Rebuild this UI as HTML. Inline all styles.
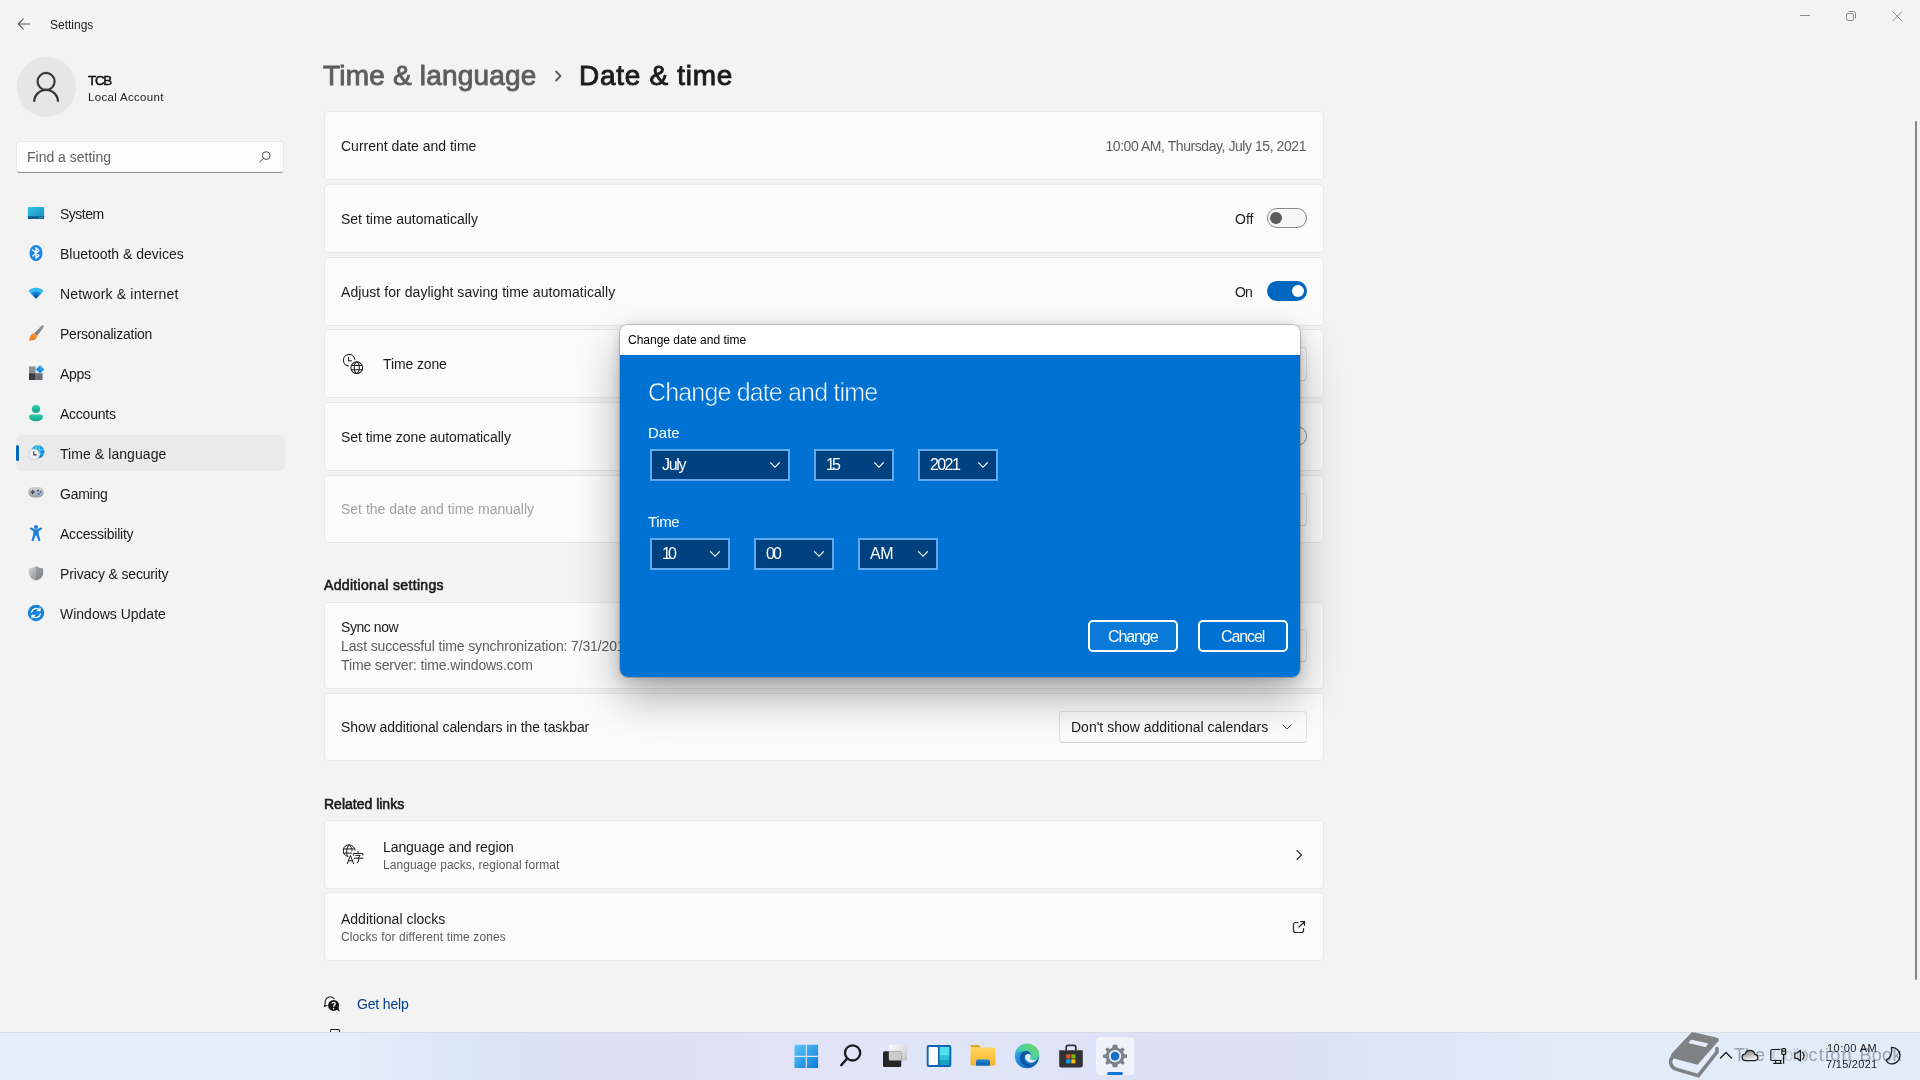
<!DOCTYPE html>
<html>
<head>
<meta charset="utf-8">
<title>Settings</title>
<style>
*{box-sizing:border-box;margin:0;padding:0}
html,body{width:1920px;height:1080px;overflow:hidden;background:#f3f3f3;font-family:"Liberation Sans",sans-serif;color:#1b1b1b}
.abs{position:absolute}
.t{position:absolute;white-space:nowrap;line-height:1}
#win{position:absolute;left:0;top:0;width:1920px;height:1032px;overflow:hidden;background:transparent;will-change:transform}
.card{position:absolute;left:324px;width:1000px;background:#fbfbfb;border:1px solid #e7e7e7;border-radius:4px}
.nav{position:absolute;font-size:14px;white-space:nowrap;line-height:1;color:#1b1b1b}
.ico{position:absolute}
.wm{font-size:18px;color:rgba(80,86,94,0.500)}
.c14{font-size:14px}
.c12{font-size:12px}
.sb{-webkit-text-stroke:0.6px #1b1b1b}
.sel{position:absolute;background:#00427f;border:2px solid #62a9ec;height:32px;color:#fff;font-size:16px}
.sel span{position:absolute;left:10px;top:6px;line-height:1;white-space:nowrap}
.sel svg{position:absolute;right:7px;top:10px}
.btn{position:absolute;height:32px;width:90px;border:2px solid #fff;border-radius:5px;color:#fff;font-size:16px;letter-spacing:-1.1px}
#taskbar{position:absolute;left:0;top:1032px;width:1920px;height:48px;background:linear-gradient(90deg,#e6eff9 0%,#e5eef9 18%,#d9e5f9 24.500%,#dcdff4 30.500%,#e0e3f5 40%,#dfe5f7 50%,#dcdff5 65%,#dce7f8 75%,#e2edf9 82%,#e2ecf8 100%);border-top:1px solid #d5dce8}

/*FIT*/
#tcb{letter-spacing:-1.35px}
#la{letter-spacing:0.32px}
#n1{letter-spacing:-0.5px}#n3{letter-spacing:0.19px}#n4{letter-spacing:-0.24px}#n5{letter-spacing:-0.3px}#n6{letter-spacing:-0.24px}
#n7{letter-spacing:0.07px}#n8{letter-spacing:-0.26px}#n9{letter-spacing:-0.22px}#n10{letter-spacing:-0.16px}
#h1a{letter-spacing:0.2px}#h1b{letter-spacing:0.7px}
#c1r{letter-spacing:-0.44px}#c3{letter-spacing:0.06px}#c3r{letter-spacing:-1px}#c4{letter-spacing:-0.12px}#c5{letter-spacing:-0.05px}
#c7a{letter-spacing:-0.43px}#c7b,#c7c{letter-spacing:-0.13px}#c8{letter-spacing:-0.08px}
#hR{letter-spacing:0px}#c9a{letter-spacing:-0.08px}#c9b{letter-spacing:0.05px}#c10b{letter-spacing:0.12px}#gh{letter-spacing:-0.17px}
#s1{letter-spacing:-1.3px}#s2{letter-spacing:-2.8px}#s3{letter-spacing:-1.6px}#s4{letter-spacing:-2.8px}#s5{letter-spacing:-2px}#s6{letter-spacing:-0.5px}
#tk1{letter-spacing:0.45px}#tk2{letter-spacing:0.28px}
#hA{letter-spacing:0.33px}
/*ENDFIT*/
</style>
</head>
<body>
<div id="win">

<!-- title bar -->
<svg class="abs" style="left:16px;top:17px" width="16" height="14" viewBox="0 0 16 14"><path d="M13.700 7H2.500M7.300 1.900L2.200 7L7.300 12.100" fill="none" stroke="#5a5a5a" stroke-width="1.100" stroke-linecap="round" stroke-linejoin="round"/></svg>
<div class="t" id="ttl" style="left:50px;top:19px;font-size:12px">Settings</div>
<svg class="abs" style="left:1796px;top:8px" width="110" height="16" viewBox="0 0 110 16"><g fill="none" stroke="#8b8b8b" stroke-width="1"><path d="M4 7.5H14"/><rect x="50.5" y="5.5" width="7" height="7" rx="1.5"/><path d="M52.5 3.5H57.5A2 2 0 0 1 59.500 5.500V10.500"/><path d="M96.500 3.500L106 13M106 3.500L96.500 13"/></g></svg>

<!-- account -->
<div class="abs" style="left:16.500px;top:57px;width:59.500px;height:59.500px;border-radius:50%;background:#e6e6e6"></div>
<svg class="abs" style="left:30px;top:70px" width="32" height="34" viewBox="0 0 32 34"><circle cx="16.100" cy="11.450" r="8.500" fill="none" stroke="#393939" stroke-width="2.200"/><path d="M4.200 31.800A11.900 11.900 0 0 1 28 31.800" fill="none" stroke="#393939" stroke-width="2.200"/></svg>
<div class="t" id="tcb" style="left:88px;top:73.500px;font-size:13.500px;color:#0c0c0c;-webkit-text-stroke:0.450px #0c0c0c">TCB</div>
<div class="t" id="la" style="left:88px;top:92px;font-size:11.500px">Local Account</div>

<!-- search -->
<div class="abs" style="left:16px;top:141px;width:268px;height:32px;background:#fcfcfc;border:1px solid #e8e8e8;border-bottom:1px solid #8c8c8c;border-radius:4px"></div>
<div class="t" id="fs" style="left:27px;top:150px;font-size:14px;color:#616161">Find a setting</div>
<svg class="abs" style="left:258px;top:150px" width="14" height="14" viewBox="0 0 14 14"><circle cx="8.200" cy="5.600" r="3.900" fill="none" stroke="#4a4a4a" stroke-width="1"/><path d="M5.400 8.400L1.800 12" stroke="#4a4a4a" stroke-width="1" stroke-linecap="round"/></svg>

<!-- nav -->
<div class="abs" style="left:16px;top:434.500px;width:268.500px;height:36px;background:#eaeaea;border-radius:5px"></div>
<div class="abs" style="left:16px;top:445px;width:3px;height:16px;background:#0067c0;border-radius:2px"></div>
<div class="nav" id="n1" style="left:60px;top:207px">System</div>
<div class="nav" id="n2" style="left:60px;top:247px">Bluetooth &amp; devices</div>
<div class="nav" id="n3" style="left:60px;top:287px">Network &amp; internet</div>
<div class="nav" id="n4" style="left:60px;top:327px">Personalization</div>
<div class="nav" id="n5" style="left:60px;top:367px">Apps</div>
<div class="nav" id="n6" style="left:60px;top:407px">Accounts</div>
<div class="nav" id="n7" style="left:60px;top:447px">Time &amp; language</div>
<div class="nav" id="n8" style="left:60px;top:487px">Gaming</div>
<div class="nav" id="n9" style="left:60px;top:527px">Accessibility</div>
<div class="nav" id="n10" style="left:60px;top:567px">Privacy &amp; security</div>
<div class="nav" id="n11" style="left:60px;top:607px">Windows Update</div>
<svg width="0" height="0" style="position:absolute"><defs>
<linearGradient id="gSys" x1="0" y1="0" x2="1" y2="1"><stop offset="0" stop-color="#35c6e4"/><stop offset="1" stop-color="#1783bd"/></linearGradient>
<linearGradient id="gAcc" x1="0" y1="0" x2="0" y2="1"><stop offset="0" stop-color="#2ecbaa"/><stop offset="1" stop-color="#13a58c"/></linearGradient>
<linearGradient id="gShield" x1="0" y1="0" x2="1" y2="1"><stop offset="0" stop-color="#d2d2d4"/><stop offset="0.5" stop-color="#a9abae"/><stop offset="1" stop-color="#7d8084"/></linearGradient>
<linearGradient id="gGame" x1="0" y1="0" x2="0" y2="1"><stop offset="0" stop-color="#cdd1d6"/><stop offset="1" stop-color="#9ba1a9"/></linearGradient>
<linearGradient id="gBrush" x1="1" y1="0" x2="0" y2="1"><stop offset="0" stop-color="#9aa0a8"/><stop offset="1" stop-color="#6a7078"/></linearGradient>
<linearGradient id="gBrush2" x1="1" y1="0" x2="0" y2="1"><stop offset="0" stop-color="#f7a43a"/><stop offset="1" stop-color="#ee6f17"/></linearGradient>
<linearGradient id="gGlobe" x1="0" y1="0" x2="1" y2="1"><stop offset="0" stop-color="#35c1f1"/><stop offset="1" stop-color="#0f6fd0"/></linearGradient>
</defs></svg>
<!-- System -->
<svg class="ico" style="left:26px;top:203px" width="20" height="20" viewBox="0 0 20 20"><rect x="1.9" y="4.100" width="16.200" height="11.900" rx="1" fill="url(#gSys)"/><path d="M1.900 13.300H18.100V15A1 1 0 0 1 17.100 16H2.900A1 1 0 0 1 1.900 15Z" fill="#0e5f8f"/><rect x="13.400" y="14.200" width="1.100" height="0.900" fill="#7fd4ee"/><rect x="15.300" y="14.200" width="1.100" height="0.900" fill="#7fd4ee"/></svg>
<!-- Bluetooth -->
<svg class="ico" style="left:26px;top:243px" width="20" height="20" viewBox="0 0 20 20"><rect x="3.600" y="1.900" width="12.800" height="16.300" rx="6.400" ry="7.300" fill="#1b86ea"/><path d="M6.800 6.900L12.900 12.500L10 15.300V4.700L12.900 7.500L6.800 13.100" fill="none" stroke="#fff" stroke-width="1.300" stroke-linejoin="round" stroke-linecap="round"/></svg>
<!-- Network -->
<svg class="ico" style="left:26px;top:283px" width="20" height="20" viewBox="0 0 20 20"><path d="M10 15.600L2.300 7.900A10.900 10.900 0 0 1 17.700 7.900Z" fill="#31b9ec"/><path d="M10 15.600L4.900 10.500A7.200 7.200 0 0 1 15.100 10.500Z" fill="#1681d4"/><path d="M10 15.600L7.300 12.900A3.800 3.800 0 0 1 12.700 12.900Z" fill="#0c57a8"/></svg>
<!-- Personalization -->
<svg class="ico" style="left:26px;top:323px" width="20" height="20" viewBox="0 0 20 20"><path d="M17.200 2.400C18 2.900 18.100 3.700 17.600 4.400L11.200 12.700L8.300 10.400L15.300 2.700C15.800 2.100 16.600 2 17.200 2.400Z" fill="url(#gBrush)"/><path d="M8.200 10.300L11.300 12.800C11.200 15.400 9 17.300 6.200 17.300C4.600 17.300 3.100 17.800 2.300 18C3.600 16.800 3.700 15.400 4.100 13.800C4.600 11.700 6.300 10.300 8.200 10.300Z" fill="url(#gBrush2)"/></svg>
<!-- Apps -->
<svg class="ico" style="left:26px;top:363px" width="20" height="20" viewBox="0 0 20 20"><rect x="3" y="3.400" width="6.700" height="6.800" fill="#8e9094"/><rect x="3" y="10.200" width="6.700" height="6.800" fill="#3b3d40"/><rect x="9.700" y="10.200" width="6.900" height="6.800" fill="#6b6e73"/><path d="M14 2.200L18.200 6.400L14 10.600L9.800 6.400Z" fill="#1b8fe9"/><path d="M14 2.200L18.200 6.400L14 6.400Z" fill="#3aa6f2"/></svg>
<!-- Accounts -->
<svg class="ico" style="left:26px;top:403px" width="20" height="20" viewBox="0 0 20 20"><circle cx="10" cy="6" r="4.100" fill="url(#gAcc)"/><path d="M5.200 11.600H14.800A2.200 2.200 0 0 1 17 13.800C17 16.700 13.800 18.300 10 18.300S3 16.700 3 13.800A2.200 2.200 0 0 1 5.200 11.600Z" fill="url(#gAcc)"/></svg>
<!-- Time & language -->
<svg class="ico" style="left:26px;top:443px" width="20" height="20" viewBox="0 0 20 20"><circle cx="11.700" cy="8.700" r="6.800" fill="url(#gGlobe)"/><path d="M11.700 1.900C8.900 4.700 8.900 12.700 11.700 15.500C14.500 12.700 14.500 4.700 11.700 1.900ZM5.200 6.800H18.200M5.400 11H18" fill="none" stroke="#62d6f7" stroke-width="0.900"/><circle cx="7.900" cy="11.500" r="5.600" fill="#f0f1f3"/><circle cx="7.900" cy="11.500" r="5.300" fill="none" stroke="#c4c7cc" stroke-width="0.700"/><path d="M7.800 8.600V11.900H10.300" fill="none" stroke="#3a3d42" stroke-width="1.100" stroke-linecap="round" stroke-linejoin="round"/></svg>
<!-- Gaming -->
<svg class="ico" style="left:26px;top:482px" width="20" height="20" viewBox="0 0 20 20"><rect x="2.100" y="4.900" width="15.800" height="10.500" rx="5.250" fill="url(#gGame)"/><path d="M6.700 7.900V12.300M4.500 10.100H8.900" stroke="#3b3f45" stroke-width="1.100"/><circle cx="12" cy="8.700" r="0.900" fill="#3b3f45"/><circle cx="14.700" cy="9.800" r="0.900" fill="#2a62b8"/><circle cx="12.600" cy="11.900" r="0.900" fill="#2a62b8"/></svg>
<!-- Accessibility -->
<svg class="ico" style="left:26px;top:523px" width="20" height="20" viewBox="0 0 20 20"><circle cx="10" cy="3.900" r="2" fill="#1c80da"/><path d="M3.900 5.200C4.100 4.600 4.700 4.400 5.200 4.600L8.600 6.100C9.500 6.500 10.500 6.500 11.400 6.100L14.800 4.600C15.300 4.400 15.900 4.600 16.100 5.200C16.300 5.700 16.100 6.300 15.600 6.500L12.700 7.900V11L14.300 16.800C14.500 17.400 14.100 18 13.600 18.100C13 18.300 12.500 18 12.300 17.400L10.400 12.600H9.600L7.700 17.400C7.500 18 7 18.300 6.400 18.100C5.900 18 5.500 17.400 5.700 16.800L7.300 11V7.900L4.400 6.500C3.900 6.300 3.700 5.700 3.900 5.200Z" fill="#1c80da"/></svg>
<!-- Privacy -->
<svg class="ico" style="left:26px;top:563px" width="20" height="20" viewBox="0 0 20 20"><path d="M10 2.900C12.100 4.500 14.500 5.300 17.100 5.400V10C17.100 14 13.600 16.500 10 17.600C6.400 16.500 2.900 14 2.900 10V5.400C5.500 5.300 7.900 4.500 10 2.900Z" fill="url(#gShield)"/><path d="M10 2.900C12.100 4.500 14.500 5.300 17.100 5.400V10C17.100 14 13.600 16.500 10 17.600Z" fill="#6f7378" opacity="0.350"/></svg>
<!-- Windows Update -->
<svg class="ico" style="left:26px;top:603px" width="20" height="20" viewBox="0 0 20 20"><circle cx="10" cy="10" r="8.150" fill="#1583d9"/><path d="M5.600 9.200A4.600 4.600 0 0 1 13.600 7.100M14.400 10.800A4.600 4.600 0 0 1 6.400 12.900" fill="none" stroke="#fff" stroke-width="1.300" stroke-linecap="round"/><path d="M14 4.900V7.500H11.400M6 15.100V12.500H8.600" fill="none" stroke="#fff" stroke-width="1.300" stroke-linecap="round" stroke-linejoin="round"/></svg>
<!--NAVICONS_END-->

<!-- heading -->
<div class="t" id="h1a" style="left:323px;top:62px;font-size:28px;color:#5d5d5d;-webkit-text-stroke:0.9px #5d5d5d">Time &amp; language</div>
<svg class="abs" style="left:553px;top:69px" width="10" height="14" viewBox="0 0 10 14"><path d="M3 2.500L7.500 7L3 11.500" fill="none" stroke="#5d5d5d" stroke-width="1.900" stroke-linecap="round" stroke-linejoin="round"/></svg>
<div class="t" id="h1b" style="left:579px;top:62px;font-size:28px;color:#1b1b1b;-webkit-text-stroke:0.9px #1b1b1b">Date &amp; time</div>

<!-- cards -->
<div class="card" style="top:111px;height:69px"></div>
<div class="card" style="top:184px;height:69px"></div>
<div class="card" style="top:257px;height:69px"></div>
<div class="card" style="top:329px;height:69px"></div>
<div class="card" style="top:402px;height:69px"></div>
<div class="card" style="top:475px;height:68px"></div>
<div class="card" style="top:602px;height:87px"></div>
<div class="card" style="top:693px;height:68px"></div>
<div class="card" style="top:820px;height:69px"></div>
<div class="card" style="top:892px;height:69px"></div>
<!-- card 1 -->
<div class="t c14" id="c1" style="left:341px;top:139px">Current date and time</div>
<div class="t c14" id="c1r" style="right:614px;top:139px;color:#5d5d5d">10:00 AM, Thursday, July 15, 2021</div>
<!-- card 2 -->
<div class="t c14" id="c2" style="left:341px;top:212px">Set time automatically</div>
<div class="t c14" id="c2r" style="left:1235px;top:212px">Off</div>
<div class="abs" style="left:1267px;top:208px;width:40px;height:20px;border-radius:10px;border:1px solid #878787;background:#f7f7f7"></div>
<div class="abs" style="left:1270px;top:212px;width:12px;height:12px;border-radius:50%;background:#5d5d5d"></div>
<!-- card 3 -->
<div class="t c14" id="c3" style="left:341px;top:285px">Adjust for daylight saving time automatically</div>
<div class="t c14" id="c3r" style="left:1235px;top:285px">On</div>
<div class="abs" style="left:1267px;top:281px;width:40px;height:20px;border-radius:10px;background:#0067c0"></div>
<div class="abs" style="left:1292px;top:285px;width:12px;height:12px;border-radius:50%;background:#fff"></div>
<!-- card 4 -->
<svg class="abs" style="left:336px;top:346px" width="40" height="40" viewBox="0 0 1080 1080"><g fill="none" stroke="#1b1b1b" stroke-width="28" stroke-linecap="round" stroke-linejoin="round"><path d="M508 363A155 155 0 1 0 333 538"/><path d="M340 300V398H420"/><circle cx="560" cy="585" r="158"/><path d="M560 427C468 480 468 690 560 743C652 690 652 480 560 427ZM414 528H706M414 642H706"/></g></svg>
<div class="t c14" id="c4" style="left:383px;top:357px">Time zone</div>
<div class="abs" style="left:1007px;top:347px;width:300px;height:34px;border:1px solid #e3e3e3;border-bottom-color:#d2d2d2;border-radius:4px;background:#fbfbfb"></div>
<!-- card 5 -->
<div class="t c14" id="c5" style="left:341px;top:430px">Set time zone automatically</div>
<div class="abs" style="left:1267px;top:426px;width:40px;height:20px;border-radius:10px;border:1px solid #8f8f8f;background:#f7f7f7"></div>
<!-- card 6 -->
<div class="t c14" id="c6" style="left:341px;top:502px;color:#a2a2a2">Set the date and time manually</div>
<div class="abs" style="left:1237px;top:493px;width:70px;height:33px;border:1px solid #e3e3e3;border-bottom-color:#d2d2d2;border-radius:4px;background:#fbfbfb"></div>
<!-- Additional settings -->
<div class="t c14 sb" id="hA" style="left:324px;top:578px">Additional settings</div>
<div class="t c14" id="c7a" style="left:341px;top:620px">Sync now</div>
<div class="t c14" id="c7b" style="left:341px;top:639px;color:#5d5d5d">Last successful time synchronization: 7/31/2019 11:31:14 AM</div>
<div class="t c14" id="c7c" style="left:341px;top:658px;color:#5d5d5d">Time server: time.windows.com</div>
<div class="abs" style="left:1227px;top:629px;width:80px;height:33px;border:1px solid #e3e3e3;border-bottom-color:#d2d2d2;border-radius:4px;background:#fbfbfb"></div>
<div class="t c14" id="c8" style="left:341px;top:720px">Show additional calendars in the taskbar</div>
<div class="abs" style="left:1059px;top:711px;width:248px;height:32px;border:1px solid #e3e3e3;border-bottom-color:#d2d2d2;border-radius:4px;background:#fbfbfb"></div>
<div class="t c14" id="c8r" style="left:1071px;top:720px">Don't show additional calendars</div>
<svg class="abs" style="left:1281px;top:722px" width="12" height="10" viewBox="0 0 12 10"><path d="M2 3L6 7L10 3" fill="none" stroke="#4a4a4a" stroke-width="1" stroke-linecap="round" stroke-linejoin="round"/></svg>
<!-- Related links -->
<div class="t c14 sb" id="hR" style="left:324px;top:797px">Related links</div>
<svg class="abs" style="left:336px;top:836px" width="40" height="40" viewBox="0 0 1080 1080"><g fill="none" stroke="#1b1b1b" stroke-width="27" stroke-linecap="round" stroke-linejoin="round"><path d="M514 383A160 160 0 1 0 311 554"/><path d="M355 240C272 300 268 480 318 552M355 240C415 285 440 345 432 400M212 350H498M205 462H420"/><path d="M305 748L390 522L475 748M335 668H445"/><path d="M595 420V446M470 518V472H725V518M535 524H650L602 598M492 600H725M610 602V680Q610 712 570 712"/></g></svg>
<div class="t c14" id="c9a" style="left:383px;top:840px">Language and region</div>
<div class="t c12" id="c9b" style="left:383px;top:859px;color:#5d5d5d">Language packs, regional format</div>
<svg class="abs" style="left:1293px;top:848px" width="12" height="14" viewBox="0 0 12 14"><path d="M4 2.500L8.500 7L4 11.500" fill="none" stroke="#2a2a2a" stroke-width="1.100" stroke-linecap="round" stroke-linejoin="round"/></svg>
<div class="t c14" id="c10a" style="left:341px;top:912px">Additional clocks</div>
<div class="t c12" id="c10b" style="left:341px;top:931px;color:#5d5d5d">Clocks for different time zones</div>
<svg class="abs" style="left:1291px;top:919px" width="16" height="16" viewBox="0 0 16 16"><g fill="none" stroke="#2a2a2a" stroke-width="1.200" stroke-linecap="round" stroke-linejoin="round"><path d="M7 3.500H4.500A2 2 0 0 0 2.500 5.500V11.500A2 2 0 0 0 4.500 13.500H10.500A2 2 0 0 0 12.500 11.500V9.500"/><path d="M9.500 2.500H13.500V6.500M13.500 2.500L8 8"/></g></svg>
<!-- Get help -->
<svg class="abs" style="left:316px;top:986px" width="40" height="40" viewBox="0 0 1080 1080"><path d="M488 340A135 135 0 0 0 250 440Q252 500 224 552L292 526" fill="none" stroke="#1b1b1b" stroke-width="28" stroke-linecap="round" stroke-linejoin="round"/><circle cx="475" cy="525" r="148" fill="#151515"/><path d="M555 640L648 698L600 585Z" fill="#151515"/><path d="M432 478Q436 440 476 440Q520 440 520 482Q520 512 473 545V562" fill="none" stroke="#fff" stroke-width="36" stroke-linejoin="round"/><circle cx="473" cy="610" r="22" fill="#fff"/></svg>
<div class="t c14" id="gh" style="left:357px;top:997px;color:#003e92">Get help</div>
<div class="abs" style="left:330px;top:1029px;width:10px;height:6px;border:1.200px solid #1b1b1b;border-radius:1px"></div>
<!-- scrollbar -->
<div class="abs" style="left:1915px;top:121px;width:2px;height:859px;background:#868686;border-radius:1px"></div>
<!--CARDCONTENT_END-->

<div class="abs" id="dlg" style="left:620px;top:325px;width:680px;height:352px;border-radius:8px;background:linear-gradient(#fff 0,#fff 30px,#0072d4 30px);box-shadow:0 0 0 1px rgba(90,90,90,0.330),0 20px 44px rgba(0,0,0,0.310),0 2px 12px rgba(0,0,0,0.170);overflow:hidden">
<div class="t" id="dt" style="left:8px;top:9px;font-size:12px;color:#000">Change date and time</div>
<div class="t" id="dh" style="left:28px;top:55px;font-size:25px;letter-spacing:-0.84px;color:#fff;-webkit-text-stroke:0.600px #0072d4">Change date and time</div>
<div class="t" id="dl1" style="left:28px;top:100px;font-size:15px;color:#fff">Date</div>
<div class="sel" style="left:30px;top:124px;width:140px"><span id="s1">July</span><svg width="12" height="8" viewBox="0 0 12 8"><path d="M1.250 1.400L6 6.100L10.750 1.400" fill="none" stroke="#fff" stroke-width="1.250"/></svg></div>
<div class="sel" style="left:194px;top:124px;width:80px"><span id="s2">15</span><svg width="12" height="8" viewBox="0 0 12 8"><path d="M1.250 1.400L6 6.100L10.750 1.400" fill="none" stroke="#fff" stroke-width="1.250"/></svg></div>
<div class="sel" style="left:298px;top:124px;width:80px"><span id="s3">2021</span><svg width="12" height="8" viewBox="0 0 12 8"><path d="M1.250 1.400L6 6.100L10.750 1.400" fill="none" stroke="#fff" stroke-width="1.250"/></svg></div>
<div class="t" id="dl2" style="left:28px;top:189px;font-size:15px;letter-spacing:-0.4px;color:#fff">Time</div>
<div class="sel" style="left:30px;top:213px;width:80px"><span id="s4">10</span><svg width="12" height="8" viewBox="0 0 12 8"><path d="M1.250 1.400L6 6.100L10.750 1.400" fill="none" stroke="#fff" stroke-width="1.250"/></svg></div>
<div class="sel" style="left:134px;top:213px;width:80px"><span id="s5">00</span><svg width="12" height="8" viewBox="0 0 12 8"><path d="M1.250 1.400L6 6.100L10.750 1.400" fill="none" stroke="#fff" stroke-width="1.250"/></svg></div>
<div class="sel" style="left:238px;top:213px;width:80px"><span id="s6">AM</span><svg width="12" height="8" viewBox="0 0 12 8"><path d="M1.250 1.400L6 6.100L10.750 1.400" fill="none" stroke="#fff" stroke-width="1.250"/></svg></div>
<div class="btn" style="left:468px;top:295px;background:#0a7ad8"><span class="t" id="b1" style="left:18px;top:7px">Change</span></div>
<div class="btn" style="left:578px;top:295px"><span class="t" id="b2" style="left:21px;top:7px">Cancel</span></div>
</div>
<!--DIALOG_END-->
</div>
<div id="taskbar"></div>
<div id="tb" style="position:absolute;left:0;top:0;width:1920px;height:1080px;will-change:transform;pointer-events:none">
<svg width="0" height="0" style="position:absolute"><defs>
<linearGradient id="gWin" x1="0" y1="0" x2="1" y2="1"><stop offset="0" stop-color="#5bc8fb"/><stop offset="1" stop-color="#0a78d6"/></linearGradient>
<linearGradient id="gFold" x1="0" y1="0" x2="0" y2="1"><stop offset="0" stop-color="#ffd75e"/><stop offset="1" stop-color="#f6b429"/></linearGradient>
<linearGradient id="gEdge" x1="0" y1="0" x2="1" y2="1"><stop offset="0" stop-color="#35c1f1"/><stop offset="0.5" stop-color="#1b80d8"/><stop offset="1" stop-color="#0c59a4"/></linearGradient>
<linearGradient id="gEdge2" x1="0" y1="1" x2="1" y2="0"><stop offset="0" stop-color="#2fc2df"/><stop offset="1" stop-color="#6fdc5a"/></linearGradient>
<linearGradient id="gTv" x1="0" y1="0" x2="1" y2="1"><stop offset="0" stop-color="#fdfdfd"/><stop offset="1" stop-color="#bfc2c6"/></linearGradient>
</defs></svg>
<!-- start -->
<svg class="abs" style="left:794px;top:1044px" width="25" height="25" viewBox="0 0 25 25"><g fill="url(#gWin)"><path d="M0.500 0.700H11.700V11.700H0.500Z M12.900 0.700H24.100V11.700H12.900Z M0.500 12.900H11.700V24H0.500Z M12.900 12.900H24.100V24H12.900Z" fill="url(#gWin)"/></g></svg>
<!-- search -->
<svg class="abs" style="left:838px;top:1042px" width="26" height="26" viewBox="0 0 26 26"><circle cx="14.600" cy="10.900" r="7.600" fill="none" stroke="#1f1f1f" stroke-width="2.300"/><path d="M9.200 16.500L3.400 23" stroke="#1f1f1f" stroke-width="2.600" stroke-linecap="round"/></svg>
<!-- task view -->
<svg class="abs" style="left:882px;top:1044px" width="26" height="24" viewBox="0 0 26 24"><rect x="6.800" y="1" width="18.200" height="15.600" rx="1.500" fill="url(#gTv)"/><rect x="1" y="7.300" width="18.300" height="15.600" rx="1.500" fill="#262626"/><path d="M6.800 7.300H19.300V16.600H8.300A1.500 1.500 0 0 1 6.800 15.100Z" fill="#c9cbce"/></svg>
<!-- widgets -->
<svg class="abs" style="left:926px;top:1044px" width="26" height="24" viewBox="0 0 26 24"><rect x="0.700" y="1" width="24.600" height="22" rx="2" fill="#1261b4"/><rect x="2.600" y="3" width="9.400" height="18" rx="0.800" fill="#fafcff"/><rect x="13.600" y="3" width="9.800" height="8.800" fill="#4fe0e8"/><rect x="13.600" y="11.800" width="9.800" height="4.400" fill="#2bc3d3"/><rect x="13.600" y="16.200" width="9.800" height="4.800" fill="#18a4bd"/></svg>
<!-- explorer -->
<svg class="abs" style="left:969px;top:1043px" width="28" height="24" viewBox="0 0 28 24"><path d="M1.500 3.500A1.500 1.500 0 0 1 3 2H9.500L12 4.500H1.500Z" fill="#e5a419"/><path d="M1.500 4.500H25A1.500 1.500 0 0 1 26.500 6V21A1.500 1.500 0 0 1 25 22.500H3A1.500 1.500 0 0 1 1.500 21Z" fill="url(#gFold)"/><path d="M7 22.500V18.500A2 2 0 0 1 9 16.500H19A2 2 0 0 1 21 18.500V22.500Z" fill="#1b80d3"/><path d="M7 19.500H21V22.500H7Z" fill="#1267b3"/></svg>
<!-- edge -->
<svg class="abs" style="left:1014px;top:1043px" width="26" height="26" viewBox="0 0 26 26"><circle cx="13" cy="13" r="12.200" fill="url(#gEdge)"/><path d="M2 9C4 3.500 9 0.800 13.500 0.800C20 0.800 25.200 6 25.200 11.500C25.200 15 22.800 17.300 19.800 17.300C17.300 17.300 16 16 16 14.800C16 13.800 17 13.300 17 11.800C17 9.800 15 7.900 12.200 7.900C7.500 7.900 4.500 10 2 9Z" fill="url(#gEdge2)"/><path d="M12.200 7.900C8.500 7.900 5.800 10.700 5.800 14.500C5.800 19.500 9.800 23.500 15 23.500C17.500 23.500 19.500 22.800 21 21.800C19.800 22.200 18.800 22.300 17.800 22.300C13.500 22.300 10.200 19 10.200 15.300C10.200 12.500 11.800 11 13.500 10.800C15 10.600 16 11.300 16.500 12C16.500 9.800 14.800 7.900 12.200 7.900Z" fill="#0d4f9f" opacity="0.850"/><path d="M11.500 12.500C12.200 11.300 14 10.600 15.500 11.200C16.600 11.700 17 12.700 17 13.300C16.800 14.200 16 14.400 16 14.800C16 16 17.300 17.300 19.800 17.300C21 17.300 22 17 23 16.300C21 19.500 17.500 20.300 15 19.300C12 18.100 10.500 15 11.500 12.500Z" fill="#e8edf8"/></svg>
<!-- store -->
<svg class="abs" style="left:1058px;top:1043px" width="26" height="26" viewBox="0 0 26 26"><path d="M8.200 7.500V4.300A2 2 0 0 1 10.200 2.300H15.800A2 2 0 0 1 17.800 4.300V7.500" fill="none" stroke="#303235" stroke-width="1.700"/><path d="M1.200 7.300H24.800V22.500A2 2 0 0 1 22.800 24.500H3.200A2 2 0 0 1 1.200 22.500Z" fill="#303235"/><rect x="8.300" y="11.300" width="4.100" height="4.100" fill="#f25022"/><rect x="13.300" y="11.300" width="4.100" height="4.100" fill="#7fba00"/><rect x="8.300" y="16.300" width="4.100" height="4.100" fill="#00a4ef"/><rect x="13.300" y="16.300" width="4.100" height="4.100" fill="#ffb900"/></svg>
<!-- settings (active) -->
<div class="abs" style="left:1096px;top:1037px;width:38px;height:38px;border-radius:4px;background:#eff2f9;border:1px solid #f3f5fa"></div>
<svg class="abs" style="left:1102px;top:1043px" width="26" height="26" viewBox="0 0 26 26"><path id="gearp" d="M13 0.800L15.200 1.100L16 4.100L18.200 5.100L20.900 3.600L22.700 5.400L21.200 8L22.100 10.200L25.100 11V13.600L22.100 14.400L21.200 16.600L22.700 19.200L20.900 21L18.200 19.500L16 20.500L15.200 23.500H10.800L10 20.500L7.800 19.500L5.100 21L3.300 19.200L4.800 16.600L3.900 14.400L0.900 13.600V11L3.900 10.200L4.800 8L3.300 5.400L5.100 3.600L7.800 5.100L10 4.100L10.800 1.100Z" fill="#7d838b" transform="translate(0,0.800)"/><circle cx="13" cy="13.100" r="6.200" fill="#e9eef6"/><circle cx="13" cy="13.100" r="4.400" fill="#1a6fc9"/></svg>
<div class="abs" style="left:1107px;top:1072px;width:16px;height:3px;border-radius:2px;background:#0f74d4"></div>
<!-- watermark book -->
<svg class="abs" style="left:1660px;top:1025px" width="80" height="55" viewBox="0 0 1571 1080"><path d="M655 140L1105 243Q1185 262 1140 322L738 782L250 652L212 598Q225 560 262 525L600 165Q625 135 655 140Z" fill="#7f8285"/><path d="M236 640C188 705 195 822 312 866L752 996L1118 532L1118 462" fill="none" stroke="#7f8285" stroke-width="70" stroke-linecap="round" stroke-linejoin="miter"/><path d="M618 300L932 370L890 420L575 348Z" fill="#e3ebf7" stroke="#e3ebf7" stroke-width="26" stroke-linejoin="round"/></svg>
<div class="t wm" id="wm1" style="left:1734px;top:1046px">The</div>
<div class="t wm" id="wm2" style="left:1771.500px;top:1046px;letter-spacing:-1px;color:rgba(80,86,94,0.220)">Colle</div>
<div class="t wm" id="wm3" style="left:1808.500px;top:1046px;letter-spacing:1.250px">ction</div>
<div class="t wm" id="wm4" style="left:1859.500px;top:1046px;letter-spacing:0.300px">Book</div>
<!-- tray icons -->
<svg class="abs" style="left:1718px;top:1049px" width="16" height="12" viewBox="0 0 16 12"><path d="M2 9.500L8 3.500L14 9.500" fill="none" stroke="#1b1b1b" stroke-width="1.300"/></svg>
<svg class="abs" style="left:1735px;top:1040px" width="80" height="30" viewBox="0 0 1920 720"><defs><linearGradient id="gCloud" x1="0" y1="0" x2="0.300" y2="1"><stop offset="0" stop-color="#7d7d7d"/><stop offset="0.550" stop-color="#b9b6b2"/><stop offset="1" stop-color="#f2f0ee"/></linearGradient></defs>
<path d="M255 492C150 492 140 350 245 335C275 215 455 215 478 345C570 350 575 492 480 492Z" fill="url(#gCloud)" stroke="#1b1b1b" stroke-width="30" stroke-linejoin="round"/>
<g fill="none" stroke="#1b1b1b" stroke-width="29">
<path d="M1085 228H890Q860 228 860 258V462Q860 492 890 492H1120"/>
<path d="M975 495V560M1092 495V560M915 562H1125"/>
<rect x="1125" y="205" width="90" height="140" rx="22"/>
<path d="M1128 268H1212M1167 345V572"/>
<path d="M1435 312H1490L1570 248V505L1490 440H1435Z" stroke-linejoin="round"/>
<path d="M1625 295Q1690 375 1625 458" stroke-linecap="round"/>
<path d="M1690 255Q1790 375 1690 498" stroke-linecap="round" stroke="#9aa0a8" stroke-width="24"/>
</g></svg>
<div class="t" id="tk1" style="left:1827px;top:1043px;font-size:11px;color:#1b1b1b">10:00 AM</div>
<div class="t" id="tk2" style="left:1826px;top:1059px;font-size:11px;color:#1b1b1b">7/15/2021</div>
<svg class="abs" style="left:1860px;top:1035px" width="60" height="40" viewBox="0 0 1620 1080"><path d="M850 334A222 222 0 1 1 800 770Q735 742 703 672Q885 600 850 334Z" fill="none" stroke="#1b1b1b" stroke-width="34" stroke-linejoin="round"/></svg>
<!--TASKBAR_END-->
</div>
</body>
</html>
